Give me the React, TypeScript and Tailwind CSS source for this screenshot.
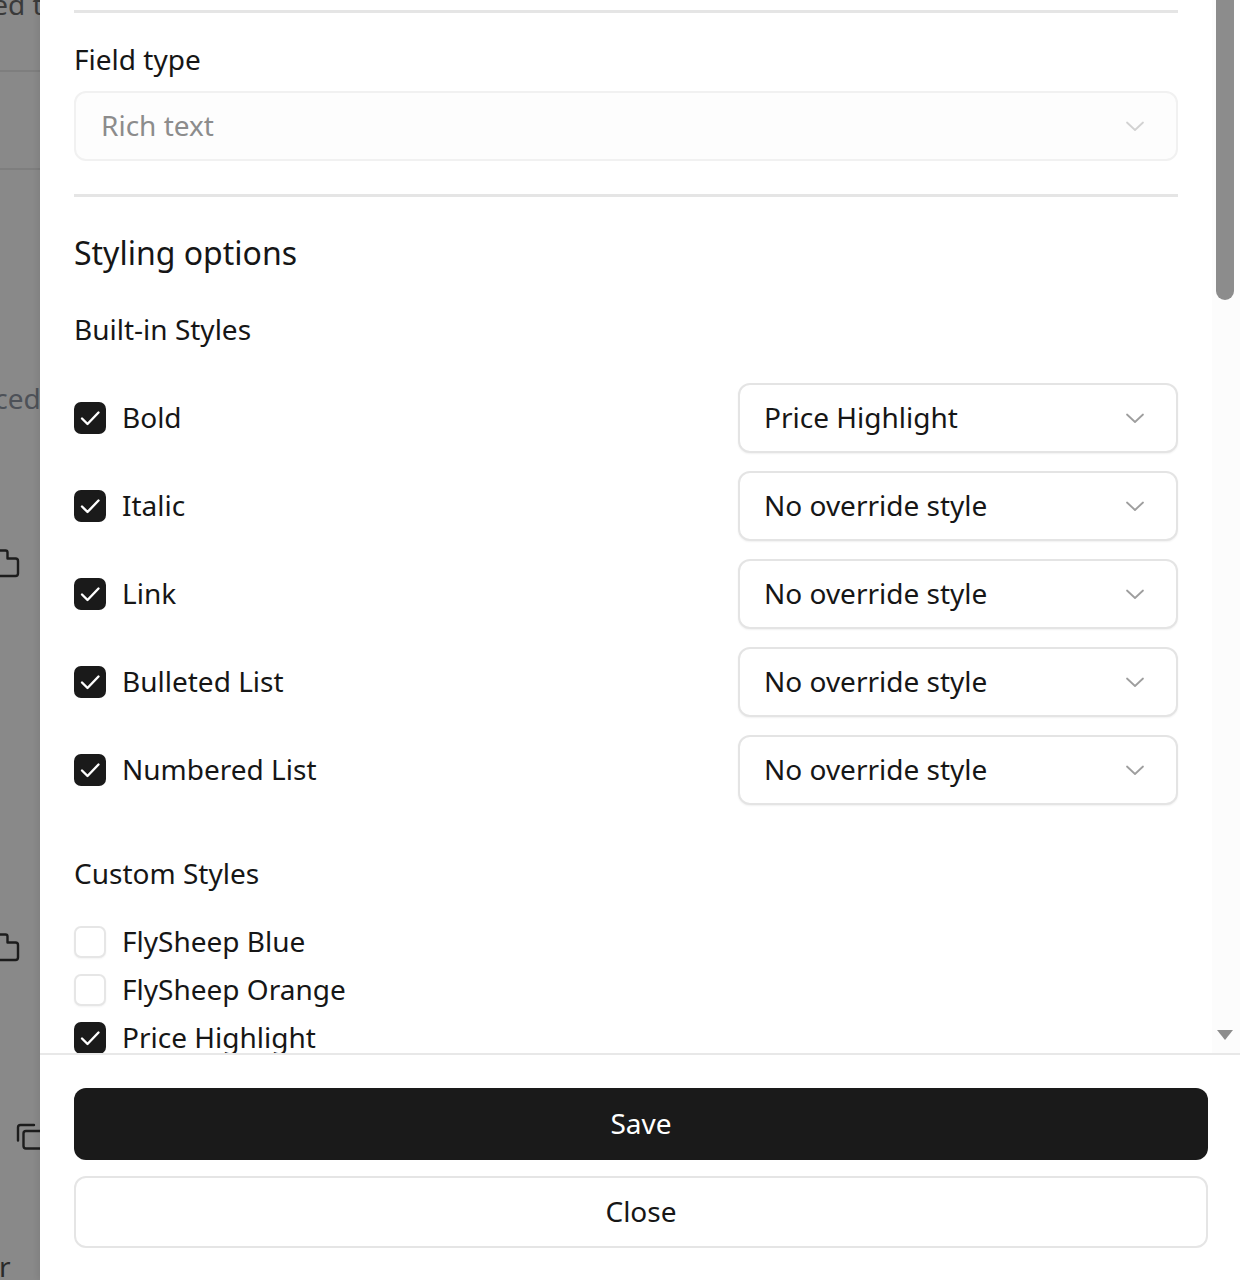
import React from "react";

const font = { fontFamily: '"Noto Sans", "Open Sans", sans-serif' };

function Chevron({ color }: { color: string }) {
  return (
    <svg width="20" height="12" viewBox="0 0 20 12" fill="none" className="shrink-0">
      <path d="M2 2.5l8 7.5 8-7.5" stroke={color} strokeWidth="1.8" strokeLinecap="round" strokeLinejoin="round" />
    </svg>
  );
}

function Check({ checked }: { checked: boolean }) {
  if (!checked) {
    return (
      <span className="w-[32px] h-[32px] shrink-0 rounded-[7px] border-2 border-[#e6e6e6] bg-white shadow-[0_1px_2px_rgba(0,0,0,0.05)]" />
    );
  }
  return (
    <span className="w-[32px] h-[32px] shrink-0 rounded-[7px] bg-[#1a1a1a] flex items-center justify-center">
      <svg width="32" height="32" viewBox="0 0 32 32" fill="none">
        <path d="M8 16.5l5.5 5.5L24.5 10.5" stroke="#fff" strokeWidth="2.4" strokeLinecap="round" strokeLinejoin="round" />
      </svg>
    </span>
  );
}

function StyleSelect({ value }: { value: string }) {
  return (
    <div className="w-[440px] h-[70px] rounded-[12px] border-2 border-[#e4e4e4] bg-white shadow-[0_1px_2px_rgba(0,0,0,0.06)] flex items-center justify-between pl-[24px] pr-[31px]">
      <span className="text-[28px] leading-[40px] pb-[2px] text-[#161616]">{value}</span>
      <Chevron color="#9e9e9e" />
    </div>
  );
}

const builtIn: [string, string][] = [
  ["Bold", "Price Highlight"],
  ["Italic", "No override style"],
  ["Link", "No override style"],
  ["Bulleted List", "No override style"],
  ["Numbered List", "No override style"],
];

const custom: [string, boolean][] = [
  ["FlySheep Blue", false],
  ["FlySheep Orange", false],
  ["Price Highlight", true],
  ["Sale Badge", false],
  ["Muted Note", false],
];

function FolderGlyph() {
  return (
    <svg width="20" height="30" viewBox="0 0 20 30" fill="none">
      <path
        d="M-4 2.5H5.5Q7.5 2.5 7.5 4.5V10.5H15.5Q18 10.5 18 13V25.5Q18 28 15.5 28H-4"
        stroke="#1c1c1c"
        strokeWidth="2.4"
        strokeLinejoin="round"
      />
    </svg>
  );
}

function CopyGlyph() {
  return (
    <svg width="26" height="30" viewBox="0 0 26 30" fill="none">
      <path d="M4 18.5V5.5Q4 3 6.5 3H20" stroke="#1c1c1c" strokeWidth="2.4" strokeLinecap="round" />
      <path d="M32 9H12Q9.5 9 9.5 11.5V24Q9.5 26.5 12 26.5H32" stroke="#1c1c1c" strokeWidth="2.4" />
    </svg>
  );
}

// Dimmed page that sits behind the drawer
function Backdrop() {
  return (
    <div className="w-[40px] shrink-0 h-[1280px] overflow-hidden bg-[#898989]">
      <div className="ml-[-62px] mt-[-16px] h-[40px] text-[28px] leading-[40px] text-[#3a3a3a] whitespace-nowrap">
        Linked to
      </div>
      <div className="mt-[46px] h-[2px] bg-[#7e7e7e]" />
      <div className="mt-[96px] h-[2px] bg-[#7e7e7e]" />
      <div className="ml-[-88px] mt-[208px] h-[40px] text-[28px] leading-[40px] text-[#4d5158] whitespace-nowrap">
        Advanced
      </div>
      <div className="mt-[130px] h-[30px]">
        <FolderGlyph />
      </div>
      <div className="mt-[354px] h-[30px]">
        <FolderGlyph />
      </div>
      <div className="mt-[160px] ml-[14px] h-[30px]">
        <CopyGlyph />
      </div>
      <div className="ml-[-68px] mt-[94px] h-[40px] text-[28px] leading-[40px] text-[#2a2a2a] whitespace-nowrap">
        Editor
      </div>
    </div>
  );
}

export default function App() {
  return (
    <div className="w-[1240px] h-[1280px] flex overflow-hidden bg-white" style={font}>
      <Backdrop />
      <div className="flex-1 h-[1280px] bg-white flex flex-col shadow-[-2px_0_6px_rgba(0,0,0,0.08)]">
        <div className="flex-1 min-h-0 flex overflow-hidden">
          <div className="flex-1 px-[34px] pt-[10px] text-[#161616]">
            <div className="h-[3px] bg-[#e5e5e5]" />
            <div className="mt-[26px] pb-[1px] text-[28px] leading-[40px]">Field type</div>
            <div className="mt-[11px] h-[70px] rounded-[12px] border-2 border-[#f1f1f1] bg-[#fdfdfd] flex items-center justify-between pl-[25px] pr-[31px]">
              <span className="text-[28px] leading-[40px] pb-[2px] text-[#8c8c8c]">Rich text</span>
              <Chevron color="#d2d2d2" />
            </div>
            <div className="mt-[33px] h-[3px] bg-[#e5e5e5]" />
            <div className="mt-[32px] text-[32px] leading-[48px]">Styling options</div>
            <div className="mt-[32px] pb-[1px] text-[28px] leading-[40px]">Built-in Styles</div>
            <div className="mt-[33px] flex flex-col gap-[18px]">
              {builtIn.map(([label, value]) => (
                <div key={label} className="flex items-center justify-between">
                  <div className="flex items-center gap-[16px]">
                    <Check checked />
                    <span className="text-[28px] leading-[40px] pb-[2px]">{label}</span>
                  </div>
                  <StyleSelect value={value} />
                </div>
              ))}
            </div>
            <div className="mt-[48px] pb-[1px] text-[28px] leading-[40px]">Custom Styles</div>
            <div className="mt-[27px] flex flex-col gap-[6px]">
              {custom.map(([label, on]) => (
                <div key={label} className="flex items-center gap-[16px]">
                  <Check checked={on} />
                  <span className="text-[28px] leading-[40px] pb-[2px]">{label}</span>
                </div>
              ))}
            </div>
          </div>
          <div className="w-[28px] shrink-0 flex flex-col bg-[#fcfcfc]">
            <div className="ml-[4px] w-[18px] h-[300px] shrink-0 rounded-b-full bg-[#8c8c8c]" />
            <div className="flex-1" />
            <svg width="16" height="11" viewBox="0 0 16 11" className="ml-[5px] mb-[12px] shrink-0">
              <path d="M0 0H16L8 10Z" fill="#8c8c8c" />
            </svg>
          </div>
        </div>
        <div className="shrink-0 border-t-2 border-[#e8e8e8] pr-[32px] pl-[34px] pt-[33px] pb-[32px] flex flex-col gap-[16px]">
          <button className="h-[72px] rounded-[12px] bg-[#1a1a1a] text-white text-[28px] leading-[40px] pb-[2px]">
            Save
          </button>
          <button className="h-[72px] rounded-[12px] border-2 border-[#e5e5e5] bg-white text-[#161616] text-[28px] leading-[40px] pb-[2px]">
            Close
          </button>
        </div>
      </div>
    </div>
  );
}
